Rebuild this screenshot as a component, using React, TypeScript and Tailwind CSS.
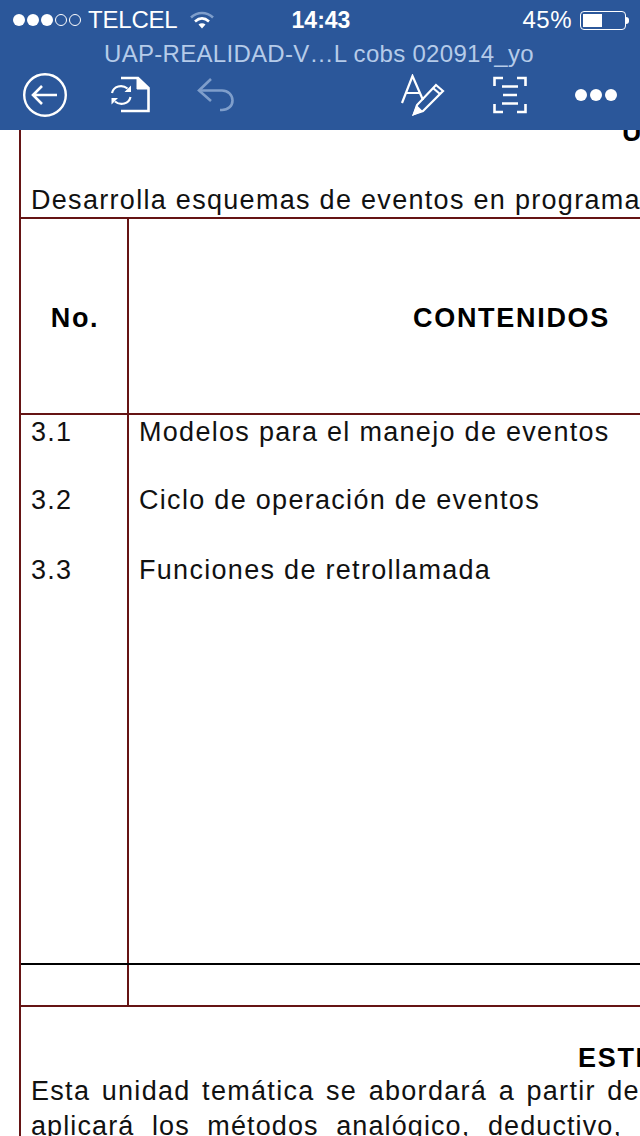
const sans = 'font-["Liberation_Sans",Arial,sans-serif]'

function StatusBar() {
  return (
    <div className="flex h-[40px] items-center justify-between pl-[13px] pr-[11px] text-white">
      <div className="flex w-[232px] items-center">
        <div className="flex gap-[2px]">
          <span className="h-[12px] w-[12px] rounded-full bg-white" />
          <span className="h-[12px] w-[12px] rounded-full bg-white" />
          <span className="h-[12px] w-[12px] rounded-full bg-white" />
          <span className="h-[12px] w-[12px] rounded-full border border-white" />
          <span className="h-[12px] w-[12px] rounded-full border border-white" />
        </div>
        <span className="ml-[7px] text-[24px] leading-none tracking-[-0.2px]">TELCEL</span>
        <svg className="ml-[11px]" width="26" height="20" viewBox="0 0 26 20" fill="none">
          <path d="M2 7.5C8.5 1.5 17.5 1.5 24 7.5" stroke="#7f9ecb" strokeWidth="2.6" />
          <path d="M6 11.5C10.5 7.5 15.5 7.5 20 11.5" stroke="#fff" strokeWidth="2.6" />
          <path d="M9.5 14.5C11.5 12.8 14.5 12.8 16.5 14.5L13 18.5Z" fill="#fff" />
        </svg>
      </div>
      <span className="text-[23px] font-bold leading-none">14:43</span>
      <div className="flex w-[232px] items-center justify-end">
        <span className="text-[24px] leading-none tracking-[0.5px]">45%</span>
        <div className="ml-[8px] flex h-[19px] w-[46px] rounded-[4px] border border-white p-[2px]">
          <div className="h-full w-[19px] bg-white" />
        </div>
        <span className="h-[7px] w-[3px] rounded-r-full bg-white" />
      </div>
    </div>
  )
}

function Toolbar() {
  return (
    <div className="flex h-[62px] items-center pb-[8px] pl-[22px] pr-[15px]">
      <svg width="46" height="46" viewBox="0 0 46 46" fill="none" stroke="#fff" strokeWidth="2.4">
        <circle cx="23" cy="23" r="20.8" />
        <path d="M35 23H11.5M20 14L11 23L20 32" strokeWidth="2.6" />
      </svg>
      <svg className="ml-[41px]" width="42" height="38" viewBox="0 0 42 38" fill="none" stroke="#fff" strokeWidth="2.6">
        <path d="M12 2H29L39.5 12V35H12" />
        <path d="M28 2V13H40" fill="#fff" strokeWidth="1" />
        <path d="M3 17C4.5 10 13 8 18.5 12.5" strokeWidth="2.2" />
        <path d="M22 9.5V16H15.5Z" fill="#fff" stroke="none" />
        <path d="M21.5 21C20 28 11.5 30 6 25.5" strokeWidth="2.2" />
        <path d="M2.5 28.5V22H9Z" fill="#fff" stroke="none" />
      </svg>
      <svg className="ml-[45px]" width="42" height="38" viewBox="0 0 42 38" fill="none" stroke="#7f9ecb" strokeWidth="2.6">
        <path d="M15 3L3 14.5L15 25" />
        <path d="M3 14.5H26C32 14.5 36.5 19 36.5 24.5C36.5 30 32 34 26 34H24" />
      </svg>
      <svg className="ml-[162px]" width="46" height="42" viewBox="0 0 46 42" fill="none" stroke="#fff" strokeWidth="2.2">
        <path d="M2 29L12.5 2L23 26M6 19H20" />
        <path d="M36 11L43 17L23 37L14 40L17 31Z" />
        <path d="M33 14L40 20" />
        <path d="M14 40L17 33L21 37Z" fill="#fff" />
      </svg>
      <svg className="ml-[47px]" width="34" height="38" viewBox="0 0 34 38" fill="none" stroke="#fff" strokeWidth="2.6">
        <path d="M1.5 10V2H10M24 2H32.5V10M1.5 28V36H10M24 36H32.5V28" />
        <path d="M9 10.5H25M10 19H24M9 27.5H25" />
      </svg>
      <div className="ml-[48px] flex gap-[3px]">
        <span className="h-[12px] w-[12px] rounded-full bg-white" />
        <span className="h-[12px] w-[12px] rounded-full bg-white" />
        <span className="h-[12px] w-[12px] rounded-full bg-white" />
      </div>
    </div>
  )
}

export default function App() {
  const rows = [
    { no: '3.1', text: 'Modelos para el manejo de eventos', height: 'h-[68px]' },
    { no: '3.2', text: 'Ciclo de operación de eventos', height: 'h-[70px]' },
    { no: '3.3', text: 'Funciones de retrollamada', height: 'h-[410px]' },
  ]

  return (
    <div className={`h-[1136px] w-[640px] overflow-hidden bg-white ${sans}`}>
      <header className="h-[130px] bg-[#2b579a]">
        <StatusBar />
        <div className="h-[28px] whitespace-nowrap pl-[104px] text-[24px] leading-[28px] tracking-[0.3px] text-[#b5cbe9]">
          UAP-REALIDAD-V…L cobs 020914_yo
        </div>
        <Toolbar />
      </header>

      <main className="ml-[19px] h-[1006px] overflow-hidden whitespace-nowrap border-l-2 border-[#651414] text-[27px] tracking-[1.3px] text-[#111]">
        <section className="h-[87px] overflow-hidden">
          <div className="-mt-[13px] h-[30px] pl-[601px] font-bold leading-[30px] text-black">U</div>
          <p className="mt-[38px] pl-[10px] leading-[30px]">Desarrolla esquemas de eventos en programa</p>
        </section>

        <div className="grid h-[196px] grid-cols-[108px_1fr] border-t-2 border-[#651414] font-bold tracking-[1.7px] text-black">
          <div className="flex items-center justify-center border-r-2 border-[#651414] pl-[2px] pt-[4px]">No.</div>
          <div className="flex items-center pl-[284px] pt-[4px]">CONTENIDOS</div>
        </div>

        <div className="border-t-2 border-[#651414]">
          {rows.map((row) => (
            <div key={row.no} className={`grid grid-cols-[108px_1fr] ${row.height}`}>
              <div className="border-r-2 border-[#651414] pl-[10px] leading-[34px]">{row.no}</div>
              <div className="pl-[10px] leading-[34px]">{row.text}</div>
            </div>
          ))}
        </div>

        <div className="grid h-[42px] grid-cols-[108px_1fr] border-t-2 border-black">
          <div className="border-r-2 border-[#651414]" />
          <div />
        </div>

        <section className="border-t-2 border-[#651414]">
          <div className="mt-[36px] pl-[557px] font-bold leading-[30px] tracking-[1.7px] text-black">ESTI</div>
          <p className="mt-[3px] pl-[10px] leading-[30px] [word-spacing:2.7px]">Esta unidad temática se abordará a partir de</p>
          <p className="mt-[5px] pl-[10px] leading-[30px] tracking-[1.1px] [word-spacing:9px]">aplicará los métodos analógico, deductivo,</p>
        </section>
      </main>
    </div>
  )
}
